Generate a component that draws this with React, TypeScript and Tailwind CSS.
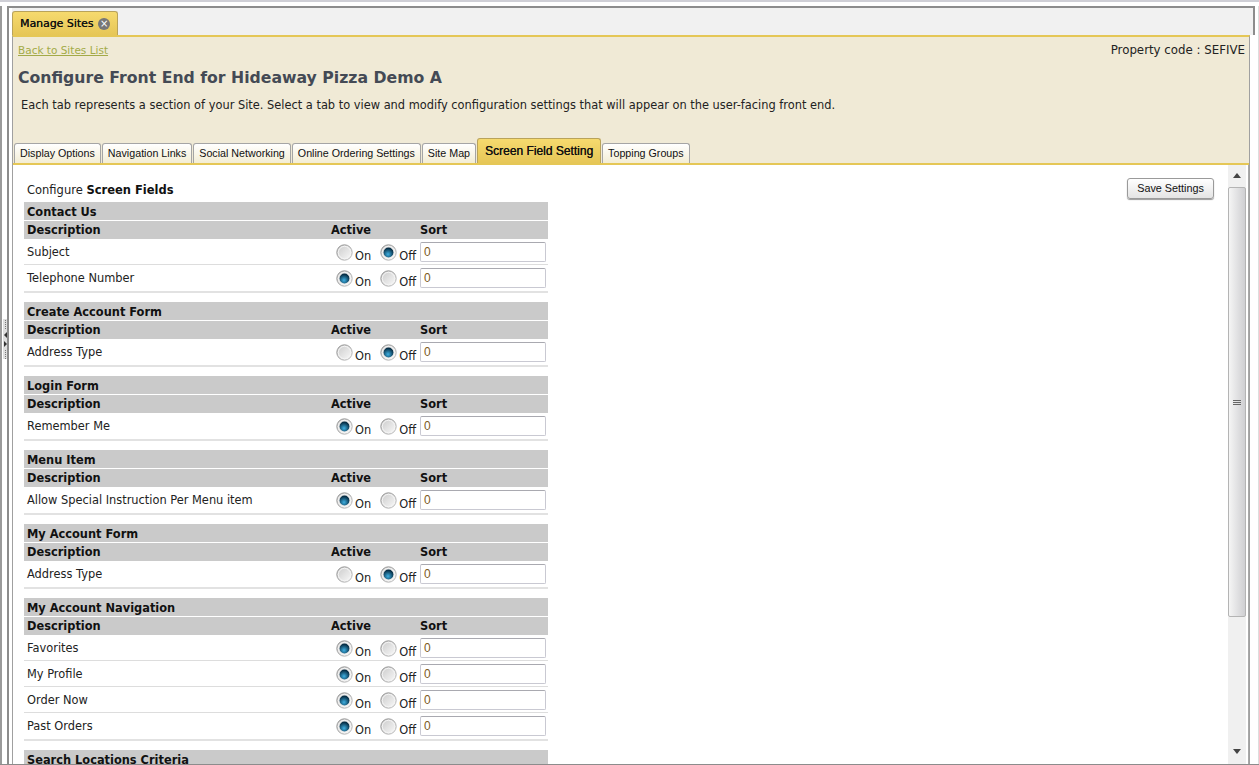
const verdana = 'font-["DejaVu_Sans",sans-serif]'

const groups = [
  { title: 'Contact Us', rows: [['Subject', false], ['Telephone Number', true]] },
  { title: 'Create Account Form', rows: [['Address Type', false]] },
  { title: 'Login Form', rows: [['Remember Me', true]] },
  { title: 'Menu Item', rows: [['Allow Special Instruction Per Menu item', true]] },
  { title: 'My Account Form', rows: [['Address Type', false]] },
  {
    title: 'My Account Navigation',
    rows: [['Favorites', true], ['My Profile', true], ['Order Now', true], ['Past Orders', true]],
  },
  { title: 'Search Locations Criteria', rows: [] },
] as { title: string; rows: [string, boolean][] }[]

const tabs = ['Display Options', 'Navigation Links', 'Social Networking', 'Online Ordering Settings', 'Site Map']

function Radio({ checked }: { checked: boolean }) {
  return (
    <svg width="17" height="17" viewBox="0 0 17 17" className="shrink-0">
      <defs>
        <linearGradient id="ring" x1="0" y1="0" x2="1" y2="1">
          <stop offset="0" stopColor="#8a8a8a" />
          <stop offset="1" stopColor="#c4c4c4" />
        </linearGradient>
        <linearGradient id="off" x1="0" y1="0" x2="1" y2="1">
          <stop offset="0" stopColor="#c9c9c9" />
          <stop offset="1" stopColor="#fbfbfb" />
        </linearGradient>
        <radialGradient id="dot" cx="0.45" cy="0.68" r="0.6">
          <stop offset="0" stopColor="#3fb0e2" />
          <stop offset="1" stopColor="#052d45" />
        </radialGradient>
      </defs>
      <circle cx="8.5" cy="8.5" r="7.7" fill="url(#off)" stroke="url(#ring)" />
      <circle cx="8.5" cy="8.5" r="6.2" fill="none" stroke="#f4f4f4" />
      {checked && <circle cx="8.5" cy="8.5" r="4.9" fill="url(#dot)" />}
    </svg>
  )
}

function Option({ label, checked }: { label: string; checked: boolean }) {
  return (
    <span className="flex items-start">
      <Radio checked={checked} />
      <span className="mt-[5px] ml-[2px] text-[11.4px] leading-[14px] text-[#222]">{label}</span>
    </span>
  )
}

function Group({ title, rows }: { title: string; rows: [string, boolean][] }) {
  return (
    <div className="mb-[9px] w-[524px] border-b-2 border-[#e2e2e2]">
      <div className="h-[18px] bg-[#cacaca] pl-[3px] text-[11.4px] leading-[21px] font-bold text-[#111]">{title}</div>
      <div className="mt-px grid h-[18px] grid-cols-[304px_89px_1fr] bg-[#cacaca] pl-[3px] text-[11.4px] leading-[19px] font-bold text-[#111]">
        <span>Description</span>
        <span>Active</span>
        <span>Sort</span>
      </div>
      {rows.map(([name, on], i) => (
        <div
          key={name}
          className={`grid h-[26px] grid-cols-[309px_84px_1fr] items-start pl-[3px] text-[11.4px] text-[#222] ${
            i < rows.length - 1 ? 'border-b border-[#dddddd]' : ''
          }`}
        >
          <span className="pt-[5px] leading-[17px]">{name}</span>
          <span className="flex gap-[9px] pt-[5px]">
            <Option label="On" checked={on} />
            <Option label="Off" checked={!on} />
          </span>
          <span className="mt-[3px] h-[20px] w-[126px] rounded-[2px] border border-[#c9c9d2] border-t-[#a9a9b0] pl-[3px] font-['Liberation_Sans',sans-serif] text-[12px] leading-[18px] text-[#7d5a22]">
            0
          </span>
        </div>
      ))}
    </div>
  )
}

function Scrollbar() {
  return (
    <div className="flex w-[18px] shrink-0 flex-col items-center bg-[#f0f0f0]">
      <div className="mt-[8px] h-0 w-0 border-x-[4px] border-b-[5px] border-x-transparent border-b-[#444]" />
      <div className="mt-[9px] flex h-[430px] w-full items-center justify-center rounded-[2px] border border-[#b4b4b4] bg-gradient-to-r from-[#f5f5f5] to-[#cfcfd2]">
        <div className="flex w-[8px] flex-col gap-px">
          <div className="h-px bg-[#666]" />
          <div className="h-px bg-[#666]" />
          <div className="h-px bg-[#666]" />
        </div>
      </div>
      <div className="mt-[132px] h-0 w-0 border-x-[4px] border-t-[5px] border-x-transparent border-t-[#444]" />
    </div>
  )
}

function Content() {
  return (
    <div className="flex min-h-0 flex-1 bg-white">
      <div className="min-w-0 flex-1 overflow-hidden pl-[11px]">
        <div className="flex h-[37px] items-start justify-between pr-[14px]">
          <p className="pt-[18px] pl-[3px] text-[11.5px] leading-[14px] text-[#222]">
            Configure <b className="text-[#111]">Screen Fields</b>
          </p>
          <button className="mt-[13px] h-[21px] w-[87px] rounded-[3px] border border-[#9a9a9a] bg-gradient-to-b from-white to-[#e4e4e4] font-['Liberation_Sans',sans-serif] text-[10.8px] text-[#111] shadow-[0_1px_1px_#999]">
            Save Settings
          </button>
        </div>
        {groups.map((g) => (
          <Group key={g.title} title={g.title} rows={g.rows} />
        ))}
      </div>
      <Scrollbar />
      <div className="w-[3px] shrink-0 border-r border-[#a8a8a8] bg-white" />
    </div>
  )
}

export default function App() {
  return (
    <div className={`flex h-[765px] w-[1259px] flex-col overflow-hidden bg-white ${verdana}`}>
      <div className="h-[2px] shrink-0 bg-[#cfcfd6]" />
      <div className="flex min-h-0 flex-1 pt-[4px]">
        {/* left splitter */}
        <div className="flex w-[7px] shrink-0 items-center border-l-2 border-[#9a9a9a] pb-[92px] pl-[1px]">
          <div className="flex h-[40px] w-[4px] flex-col items-center justify-center gap-[3px] bg-[#dedede]">
            <div className="h-[9px] border-l border-dotted border-[#777]" />
            <div className="h-0 w-0 border-y-[3px] border-r-[3px] border-y-transparent border-r-[#333]" />
            <div className="h-0 w-0 border-y-[3px] border-l-[3px] border-y-transparent border-l-[#333]" />
            <div className="h-[9px] border-l border-dotted border-[#777]" />
          </div>
        </div>

        <div className="flex min-w-0 flex-1 flex-col border-t-2 border-l-2 border-[#8c8c8c]">
          {/* top tab strip */}
          <div className="ml-[3px] flex h-[27px] shrink-0 items-end border-r-2 border-[#8c8c8c] bg-[#f1f1f1]">
            <div className="flex h-[24px] w-[106px] items-center gap-[5px] rounded-t-[3px] border border-b-0 border-[#b9a35a] bg-gradient-to-b from-[#f6da6e] to-[#e6c657] pt-px pl-[7px]">
              <span className="text-[10.9px] font-normal text-[#111] [text-shadow:0.3px_0_0_#111]">Manage Sites</span>
              <span className="flex h-[12px] w-[12px] items-center justify-center rounded-full bg-[#777] text-[10px] leading-none text-white">
                ×
              </span>
            </div>
          </div>

          <div className="mr-[5px] ml-[3px] flex min-h-0 flex-1 flex-col border-t-2 border-r border-l border-t-[#e5c756] border-r-[#a0a0a0] border-l-[#a0a0a0]">
            {/* beige header */}
            <div className="relative h-[126px] shrink-0 bg-[#f0ead6]">
              <span className="absolute top-[6px] right-[4px] text-[11.8px] leading-[14px] text-[#222]">
                Property code : SEFIVE
              </span>
              <div className="pl-[5px]">
                <a className="text-[10.5px] leading-[14px] text-[#a3aa48] underline">Back to Sites List</a>
                <h1 className="mt-[6px] text-[15.7px] leading-[22px] font-bold text-[#444a55]">
                  Configure Front End for Hideaway Pizza Demo A
                </h1>
                <p className="mt-[9px] pl-[3px] text-[11.4px] leading-[14px] text-[#222]">
                  Each tab represents a section of your Site. Select a tab to view and modify configuration settings
                  that will appear on the user-facing front end.
                </p>
              </div>
              <div className="absolute bottom-0 left-px flex items-end gap-px font-['Liberation_Sans',sans-serif]">
                {tabs.map((t) => (
                  <div
                    key={t}
                    className="flex h-[20px] items-center rounded-t-[3px] border border-b-0 border-[#a5a5a5] bg-gradient-to-b from-white to-[#f3edd4] px-[5px] text-[10.7px] text-[#111]"
                  >
                    {t}
                  </div>
                ))}
                <div className="flex h-[25px] items-center rounded-t-[3px] border border-b-0 border-[#b9a35a] bg-gradient-to-b from-[#f6da6e] to-[#e6c657] px-[7px] text-[12px] text-[#111] [text-shadow:0.2px_0_0_#111]">
                  Screen Field Setting
                </div>
                <div className="flex h-[20px] items-center rounded-t-[3px] border border-b-0 border-[#a5a5a5] bg-gradient-to-b from-white to-[#f3edd4] px-[5px] text-[10.7px] text-[#111]">
                  Topping Groups
                </div>
              </div>
            </div>
            <div className="h-[2px] shrink-0 bg-[#e5c756]" />
            <Content />
          </div>
        </div>
        <div className="w-[4px] shrink-0 border-r border-[#dddddd]" />
      </div>
      <div className="h-px shrink-0 bg-[#8c8c8c]" />
    </div>
  )
}
